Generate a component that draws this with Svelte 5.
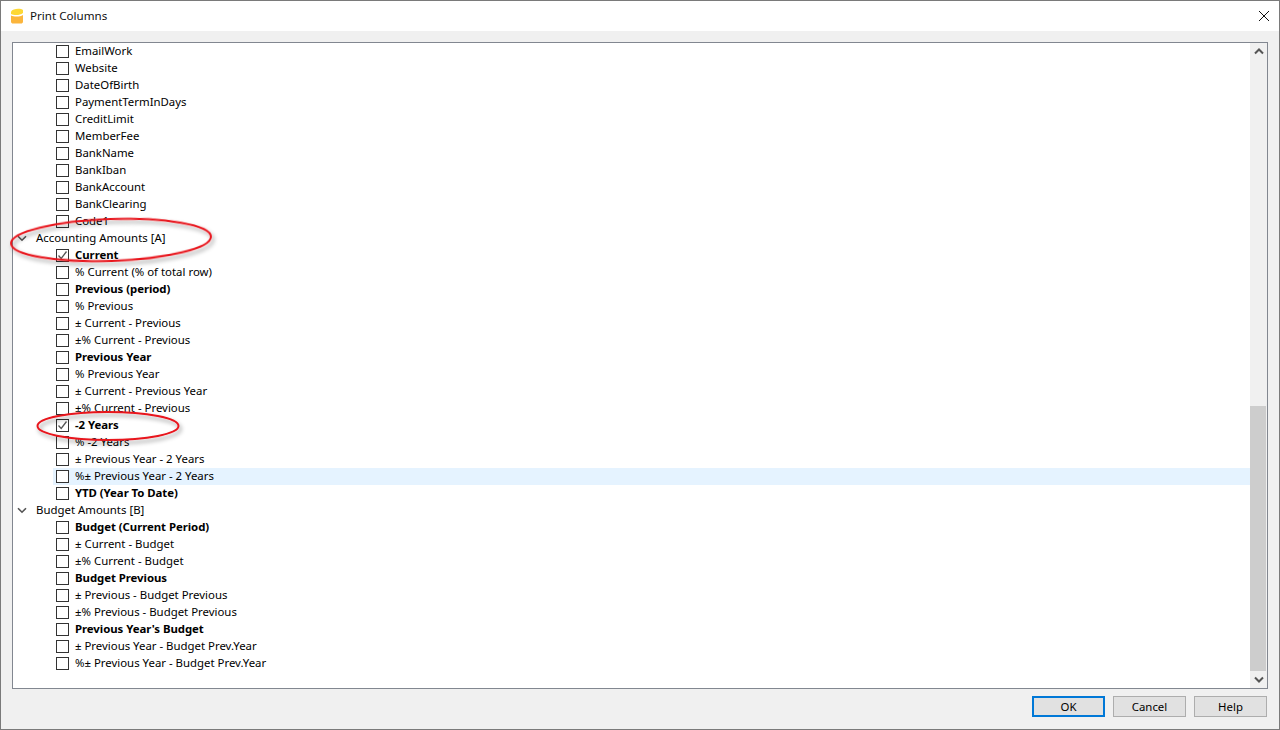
<script>
	const groupA = [
		{ text: 'Current', bold: true, checked: true },
		{ text: '% Current (% of total row)' },
		{ text: 'Previous (period)', bold: true },
		{ text: '% Previous' },
		{ text: '± Current - Previous' },
		{ text: '±% Current - Previous' },
		{ text: 'Previous Year', bold: true },
		{ text: '% Previous Year' },
		{ text: '± Current - Previous Year' },
		{ text: '±% Current - Previous' },
		{ text: '-2 Years', bold: true, checked: true },
		{ text: '% -2 Years' },
		{ text: '± Previous Year - 2 Years' },
		{ text: '%± Previous Year - 2 Years', hover: true },
		{ text: 'YTD (Year To Date)', bold: true }
	];
	const groupB = [
		{ text: 'Budget (Current Period)', bold: true },
		{ text: '± Current - Budget' },
		{ text: '±% Current - Budget' },
		{ text: 'Budget Previous', bold: true },
		{ text: '± Previous - Budget Previous' },
		{ text: '±% Previous - Budget Previous' },
		{ text: "Previous Year's Budget", bold: true },
		{ text: '± Previous Year - Budget Prev.Year' },
		{ text: '%± Previous Year - Budget Prev.Year' }
	];
	const top = [
		'EmailWork', 'Website', 'DateOfBirth', 'PaymentTermInDays', 'CreditLimit',
		'MemberFee', 'BankName', 'BankIban', 'BankAccount', 'BankClearing', 'Code1'
	].map((text) => ({ text }));

	const sections = [
		{ items: top },
		{ title: 'Accounting Amounts [A]', items: groupA },
		{ title: 'Budget Amounts [B]', items: groupB }
	];
</script>

<div class="window">
	<header class="titlebar">
		<svg class="logo" width="14" height="16" viewBox="0 0 14 16">
			<path d="M1 3.5C3 0 11 0 13 2V5C10 7.5 4 7.5 1 6Z" fill="#fdd835" />
			<path d="M1 7.5C4 9 10 9 13 7V13.5C13 15 12 15.5 11 15.5H3C2 15.5 1 15 1 13.5Z" fill="#fbb53c" />
		</svg>
		<span class="title">Print Columns</span>
		<svg class="close" width="12" height="12" viewBox="0 0 12 12">
			<path d="M1 1L11 11M11 1L1 11" stroke="#111" stroke-width="1" fill="none" />
		</svg>
	</header>

	<main class="body">
		<div class="listbox">
			<div class="tree">
				{#each sections as section}
					{#if section.title}
						<div class="row group">
							<svg class="chevron" width="10" height="7" viewBox="0 0 10 7">
								<path d="M1 1.2L5 5.2L9 1.2" stroke="#555" stroke-width="1.6" fill="none" />
							</svg>
							<span class="label">{section.title}</span>
						</div>
					{/if}
					{#each section.items as item}
						<div class="row item" class:hover={item.hover}>
							<span class="box">
								{#if item.checked}
									<svg width="11" height="11" viewBox="0 0 11 11">
										<path d="M1.5 5.5L4.2 8.5L9.5 1.5" stroke="#555" stroke-width="1.3" fill="none" />
									</svg>
								{/if}
							</span>
							<span class="label" class:bold={item.bold}>{item.text}</span>
						</div>
					{/each}
				{/each}
			</div>
			<div class="scrollbar">
				<button class="arrow" aria-label="Scroll up">
					<svg width="10" height="7" viewBox="0 0 10 7">
						<path d="M1 5.5L5 1.5L9 5.5" stroke="#555" stroke-width="2" fill="none" />
					</svg>
				</button>
				<div class="track"><div class="thumb"></div></div>
				<button class="arrow" aria-label="Scroll down">
					<svg width="10" height="7" viewBox="0 0 10 7">
						<path d="M1 1.5L5 5.5L9 1.5" stroke="#555" stroke-width="2" fill="none" />
					</svg>
				</button>
			</div>
		</div>

		<footer class="actions">
			<button class="btn primary">OK</button>
			<button class="btn">Cancel</button>
			<button class="btn">Help</button>
		</footer>
	</main>

	<svg class="marks" width="1280" height="730" viewBox="0 0 1280 730">
		<defs>
			<filter id="shadow" x="-10%" y="-30%" width="120%" height="170%">
				<feDropShadow dx="2" dy="3" stdDeviation="2" flood-color="#000" flood-opacity="0.4" />
			</filter>
		</defs>
		<ellipse cx="111" cy="240" rx="100" ry="21" transform="rotate(-2 111 240)" filter="url(#shadow)" />
		<ellipse cx="108" cy="426" rx="70.5" ry="14" filter="url(#shadow)" />
	</svg>
</div>

<style>
	:global(body) {
		margin: 0;
	}
	.window {
		position: relative;
		width: 1280px;
		height: 730px;
		box-sizing: border-box;
		border: 1px solid #7a7a7a;
		display: flex;
		flex-direction: column;
		background: #f0f0f0;
		font-family: 'Noto Sans', sans-serif;
		font-size: 11.4px;
		color: #000;
		overflow: hidden;
	}
	.titlebar {
		height: 30px;
		flex: none;
		background: #fff;
		display: flex;
		align-items: center;
		padding: 0 9px;
		gap: 6px;
	}
	.title {
		flex: 1;
		color: #111;
		font-size: 11.6px;
		line-height: 16px;
	}
	.logo {
		margin-top: -1px;
	}
	.body {
		flex: 1;
		display: flex;
		flex-direction: column;
		padding: 11px;
		min-height: 0;
	}
	.listbox {
		height: 647px;
		box-sizing: border-box;
		border: 1px solid #828790;
		background: #fff;
		display: flex;
	}
	.tree {
		flex: 1;
		overflow: hidden;
	}
	.row {
		height: 17px;
		display: flex;
		align-items: center;
		white-space: nowrap;
	}
	.label {
		line-height: 15px;
		margin-bottom: 2px;
	}
	.group {
		padding-left: 4px;
	}
	.chevron {
		margin-right: 9px;
	}
	.item {
		padding-left: 3px;
		margin-left: 40px;
	}
	.item.hover {
		background: #e5f3ff;
	}
	.box {
		width: 11px;
		height: 11px;
		border: 1px solid #333;
		background: #fff;
		display: flex;
		margin-right: 6px;
		flex: none;
	}
	.bold {
		font-weight: 700;
		letter-spacing: -0.05px;
	}
	.scrollbar {
		width: 17px;
		flex: none;
		background: #f0f0f0;
		display: flex;
		flex-direction: column;
	}
	.arrow {
		height: 17px;
		flex: none;
		padding: 0;
		border: 0;
		background: #f0f0f0;
		display: flex;
		align-items: center;
		justify-content: center;
	}
	.track {
		flex: 1;
		display: flex;
		flex-direction: column;
		justify-content: flex-end;
	}
	.thumb {
		height: 265px;
		background: #cdcdcd;
		margin-right: 1px;
	}
	.actions {
		display: flex;
		justify-content: flex-end;
		gap: 8px;
		margin-top: 7px;
		margin-right: 1px;
	}
	.btn {
		width: 73px;
		height: 21px;
		box-sizing: border-box;
		border: 1px solid #adadad;
		background: #e1e1e1;
		font: inherit;
		color: #000;
		padding: 0 0 1px;
	}
	.btn.primary {
		border: 2px solid #0078d7;
	}
	.marks {
		position: absolute;
		left: -1px;
		top: -1px;
		pointer-events: none;
	}
	.marks ellipse {
		fill: none;
		stroke: #e8141c;
		stroke-width: 2;
	}
</style>
